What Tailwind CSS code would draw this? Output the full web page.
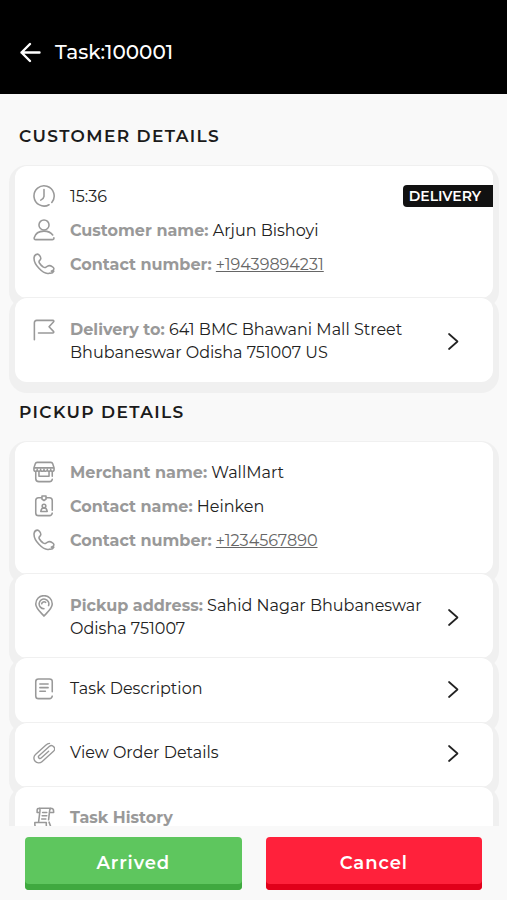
<!DOCTYPE html>
<html lang="en">
<head>
<meta charset="utf-8">
<meta name="viewport" content="width=device-width, initial-scale=1">
<title>Task:100001</title>
<script src="https://cdn.jsdelivr.net/npm/@tailwindcss/browser@4"></script>
</head>
<body class="bg-[#f9f9f9] font-[Montserrat,Inter,sans-serif] text-[16px] leading-[23px] text-[#222]">
<svg class="hidden" aria-hidden="true">
  <symbol id="phone" viewBox="0 0 24 24"><path d="M14.2 15.4 16 14.3c1.5-.9 3.500-.4 5.300.8 1.700 1.100 1.900 2.400.7 3.700l-2 1.100M17.800 22c-3.500 1.100-7.800-1.500-11.300-5.300C2.800 12.700.8 8 1.200 4.800 1.500 2.700 3 1.200 4.900 1.200c1.600 0 3.300 2.500 3.600 4.200.3 1.400-.4 2-1.400 2.900-.9.8-.6 1.800.1 2.900 1 1.600 2.200 2.800 3.600 3.800 1.200.9 2.200 1.200 3.400.4M17.800 22c1.800.3 4-.3 4.900-2.200"/></symbol>
  <symbol id="chevron" viewBox="0 0 24 24"><path d="m8 5 8.500 7.500L8 20"/></symbol>
</svg>
<div class="flex h-screen flex-col">
  <header class="flex shrink-0 items-center gap-[13px] bg-black px-[18px] pt-[38px] pb-7 text-white">
    <button type="button" aria-label="Back" class="size-6">
      <svg class="size-6" viewBox="0 0 24 24" fill="none" stroke="currentColor" stroke-width="2.400" stroke-linecap="round" stroke-linejoin="round"><path d="M21.500 12.500H3.500M12 4l-8.500 8.500L12 21"/></svg>
    </button>
    <h1 class="text-[20px] leading-7 font-medium">Task:100001</h1>
  </header>

  <main class="min-h-0 flex-1 overflow-y-auto pt-3 pr-[14px] pl-[15px] [scrollbar-width:none]">
    <section>
      <h2 class="px-1 py-[18px] text-[17px] leading-6 font-semibold tracking-[0.08em] text-[#1b1b1b]">CUSTOMER DETAILS</h2>
      <div class="rounded-xl bg-white pt-[13px] pb-[17px] pl-[17px] shadow-[0_5px_0_6px_#f0f0f0]">
        <div class="flex h-[34px] items-center gap-[14px]">
          <svg class="size-6 p-px text-[#999]" viewBox="0 0 24 24" fill="none" stroke="currentColor" stroke-width="1.700" stroke-linecap="round" stroke-linejoin="round"><path d="M20.500 19A11 11 0 1 0 17.500 21.500M12 5v7.500q-.3 2.500-3.500 4"/></svg>
          <span>15:36</span>
          <span class="ml-auto rounded-l bg-[#111] pr-3 pl-[6px] text-[14px] leading-[22px] font-semibold text-white">DELIVERY</span>
        </div>
        <div class="flex h-[34px] items-center gap-[14px]">
          <svg class="size-6 p-px text-[#999]" viewBox="0 0 24 24" fill="none" stroke="currentColor" stroke-width="1.700" stroke-linecap="round" stroke-linejoin="round"><circle cx="12" cy="6.500" r="5.500"/><path d="M21.500 17.500c-2-3-5.500-4.300-9.500-4.300-5.500 0-9.500 2.800-10.700 7.300-.3 1.300.4 2 1.700 2h18c1.200 0 2-.7 1.800-2"/></svg>
          <p><b class="font-bold text-[#999]">Customer name:</b> Arjun Bishoyi</p>
        </div>
        <div class="flex h-[34px] items-center gap-[14px]">
          <svg class="size-6 p-px text-[#999]" fill="none" stroke="currentColor" stroke-width="1.700" stroke-linecap="round" stroke-linejoin="round"><use href="#phone"/></svg>
          <p><b class="font-bold text-[#999]">Contact number:</b> <a href="tel:+19439894231" class="text-[#666] underline">+19439894231</a></p>
        </div>
      </div>
      <a href="#delivery" class="flex gap-[14px] rounded-xl bg-white pt-5 pr-[28px] pb-[18px] pl-[17px] shadow-[0_5px_0_6px_#f0f0f0]">
        <svg class="size-6 shrink-0 p-px text-[#999]" viewBox="0 0 24 24" fill="none" stroke="currentColor" stroke-width="1.700" stroke-linecap="round" stroke-linejoin="round"><path d="M1.500 22.500V4q0-2.500 2.500-2.500h17.500c1.500 0 1.500 1 .8 1.700L17.500 8.500l4.800 5c.8.900.3 1.700-.8 1.700H6"/></svg>
        <span class="flex-1"><b class="font-bold text-[#999]">Delivery to:</b> 641 BMC Bhawani Mall Street Bhubaneswar Odisha 751007 US</span>
        <svg class="size-6 shrink-0 self-center text-[#222]" fill="none" stroke="currentColor" stroke-width="1.700" stroke-linecap="round" stroke-linejoin="round"><use href="#chevron"/></svg>
      </a>
    </section>

    <section>
      <h2 class="px-1 py-[18px] text-[17px] leading-6 font-semibold tracking-[0.08em] text-[#1b1b1b]">PICKUP DETAILS</h2>
      <div class="rounded-xl bg-white pt-[13px] pb-[17px] pl-[17px] shadow-[0_5px_0_6px_#f0f0f0]">
        <div class="flex h-[34px] items-center gap-[14px]">
          <svg class="size-6 p-px text-[#999]" viewBox="0 0 24 24" fill="none" stroke="currentColor" stroke-width="1.700" stroke-linecap="round" stroke-linejoin="round"><path d="M4.500 1.500h15q1.500 0 2 1.500L23 7.500v1.700a1.800 2 0 0 1-3.700 0 1.800 2 0 0 1-3.700 0 1.800 2 0 0 1-3.600 0 1.800 2 0 0 1-3.700 0 1.800 2 0 0 1-3.700 0 1.800 2 0 0 1-3.600 0V7.500L2.500 3q.5-1.500 2-1.500ZM1 7.500h22M3 11.500V19q0 3.500 3.500 3.500H18q2.500 0 3-2.500M21 11.500v5M6.500 12v4.700h11V12"/></svg>
          <p><b class="font-bold text-[#999]">Merchant name:</b> WallMart</p>
        </div>
        <div class="flex h-[34px] items-center gap-[14px]">
          <svg class="size-6 p-px text-[#999]" viewBox="0 0 24 24" fill="none" stroke="currentColor" stroke-width="1.700" stroke-linecap="round" stroke-linejoin="round"><path d="M9.500 3H6Q3 3 3 6v13.500q0 3 3 3h12q2.500 0 3-2.700M14.500 3H18q3 0 3 3v10.500M9.800 1h4.400v3.500L12 6 9.800 4.500ZM8.500 18h7q-.5-3-2-3.500h-3q-1.500.5-2 3.500Z"/><circle cx="12" cy="12" r="2"/></svg>
          <p><b class="font-bold text-[#999]">Contact name:</b> Heinken</p>
        </div>
        <div class="flex h-[34px] items-center gap-[14px]">
          <svg class="size-6 p-px text-[#999]" fill="none" stroke="currentColor" stroke-width="1.700" stroke-linecap="round" stroke-linejoin="round"><use href="#phone"/></svg>
          <p><b class="font-bold text-[#999]">Contact number:</b> <a href="tel:+1234567890" class="text-[#666] underline">+1234567890</a></p>
        </div>
      </div>
      <a href="#pickup" class="flex gap-[14px] rounded-xl bg-white pt-5 pr-[28px] pb-[18px] pl-[17px] shadow-[0_5px_0_6px_#f0f0f0]">
        <svg class="size-6 shrink-0 p-px text-[#999]" viewBox="0 0 24 24" fill="none" stroke="currentColor" stroke-width="1.700" stroke-linecap="round" stroke-linejoin="round"><path d="M12 23c-3-3.500-9-8.500-9-13.300a9 9 0 0 1 18 0C21 14.500 15 19.500 12 23ZM12 15a5.300 5.300 0 1 1 5-3.500M9.500 9.500A2.700 2.700 0 0 1 13.800 8"/></svg>
        <span class="flex-1"><b class="font-bold text-[#999]">Pickup address:</b> Sahid Nagar Bhubaneswar Odisha 751007</span>
        <svg class="size-6 shrink-0 self-center text-[#222]" fill="none" stroke="currentColor" stroke-width="1.700" stroke-linecap="round" stroke-linejoin="round"><use href="#chevron"/></svg>
      </a>
      <a href="#description" class="flex gap-[14px] rounded-xl bg-white pt-[19px] pr-[28px] pb-[22px] pl-[17px] shadow-[0_5px_0_6px_#f0f0f0]">
        <svg class="size-6 shrink-0 p-px text-[#999]" viewBox="0 0 24 24" fill="none" stroke="currentColor" stroke-width="1.700" stroke-linecap="round" stroke-linejoin="round"><path d="M21 15V4q0-3-3-3H6Q3 1 3 4v15.500q0 3 3 3h12q2.500 0 3-2.700M7.500 6.500h9M7.500 10.500h9M7.500 14.500h6"/></svg>
        <span class="flex-1">Task Description</span>
        <svg class="size-6 shrink-0 self-center text-[#222]" fill="none" stroke="currentColor" stroke-width="1.700" stroke-linecap="round" stroke-linejoin="round"><use href="#chevron"/></svg>
      </a>
      <a href="#order" class="flex gap-[14px] rounded-xl bg-white pt-[18px] pr-[28px] pb-[22px] pl-[17px] shadow-[0_5px_0_6px_#f0f0f0]">
        <svg class="size-6 shrink-0 p-px text-[#999]" viewBox="0 0 24 24" fill="none" stroke="currentColor" stroke-width="1.500" stroke-linecap="round" stroke-linejoin="round"><path transform="rotate(-42 12 12)" d="M17 14H6a1.750 1.750 0 0 1 0-3.500H21a3.500 3.500 0 0 1 0 7H4A5.250 5.250 0 0 1 4 7H19q3 0 4.500 1.200"/></svg>
        <span class="flex-1">View Order Details</span>
        <svg class="size-6 shrink-0 self-center text-[#222]" fill="none" stroke="currentColor" stroke-width="1.700" stroke-linecap="round" stroke-linejoin="round"><use href="#chevron"/></svg>
      </a>
      <div class="flex gap-[14px] rounded-xl bg-white pt-[19px] pr-[28px] pb-[22px] pl-[17px] shadow-[0_5px_0_6px_#f0f0f0]">
        <svg class="size-6 shrink-0 p-px text-[#999]" viewBox="0 0 24 24" fill="none" stroke="currentColor" stroke-width="1.700" stroke-linecap="round" stroke-linejoin="round"><path d="M7 6H4.500V3.500Q4.500 1.300 7 1.300h12.500q3 0 3 3.200V6H18M7 1.300Q8 2 7.500 5L6 17M19.500 1.300Q18 2.500 18 5l-1 9M17.500 16.500l1.500 4q.5 2-2 2H4.500q-2.500 0-2.500-4V17h12.500v3q.5 2.500 2.500 2.500M10.500 6H15M10 9.500h5M9.500 13h4.500"/></svg>
        <h3 class="font-bold text-[#999]">Task History</h3>
      </div>
    </section>
  </main>

  <footer class="grid shrink-0 grid-cols-2 gap-6 px-[25px] pt-[11px] pb-[10px] text-[18px] leading-[53px] font-semibold tracking-wider text-white">
    <button type="button" class="rounded bg-[#5ec65e] shadow-[inset_0_-6px_0_#3fa93f]">Arrived</button>
    <button type="button" class="rounded bg-[#ff213b] shadow-[inset_0_-6px_0_#e1001a]">Cancel</button>
  </footer>
</div>
</body>
</html>
